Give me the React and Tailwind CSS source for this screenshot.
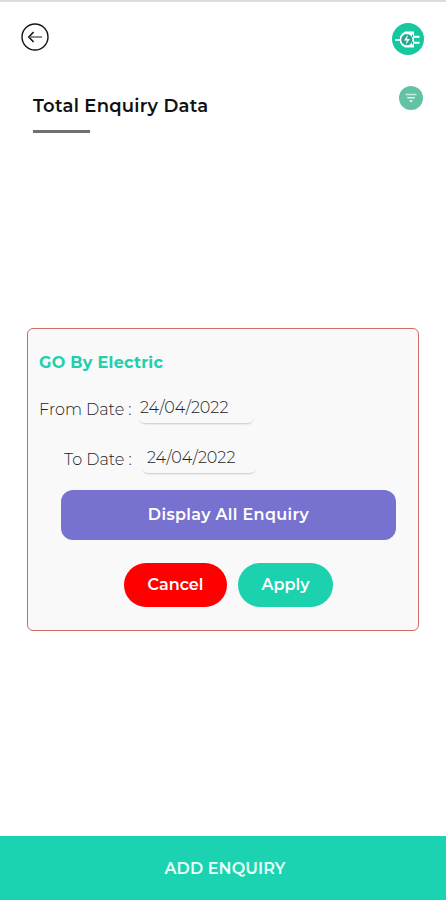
function BackIcon() {
  return (
    <svg viewBox="0 0 28 28" className="size-7" fill="none">
      <circle cx="14" cy="14" r="13" stroke="#161616" strokeWidth="1.4" />
      <path d="M12.6 9 7.8 14l4.8 5" stroke="#161616" strokeWidth="1.6" />
      <path d="M8.5 14H21" stroke="#777" strokeWidth="1.7" />
    </svg>
  );
}

function PlugLogo() {
  return (
    <svg viewBox="0 0 32 32" className="size-8" fill="none">
      <circle cx="16" cy="16" r="16" fill="#16c79f" />
      <path d="M3 17h5" stroke="#fff" strokeWidth="1.8" />
      <path d="M10 10.500 13 8.500h9v16h-9l-3-2-2-3v-6z" fill="#fff" />
      <path d="M22 13.700h5.500M22 19.800h5.500" stroke="#fff" strokeWidth="2" />
      <circle cx="14.800" cy="16.700" r="5.600" fill="#25a78c" />
      <path d="m16 11.500-4 6h3l-1.500 4.500 4.500-6h-3z" fill="#fff" />
      <path d="M20.500 11.500v2.500M20.500 18.500v3" stroke="#16b894" strokeWidth="1.2" />
    </svg>
  );
}

function FilterIcon() {
  return (
    <svg viewBox="0 0 24 24" className="size-6" fill="none">
      <circle cx="12" cy="12" r="12" fill="#63c2a6" />
      <path d="M6.500 8.500h11" stroke="#c3ebdf" strokeWidth="1.500" />
      <path d="M8.300 11.700h7.400" stroke="#e6f8f2" strokeWidth="1.500" />
      <path d="M10.700 15h2.600" stroke="#fff" strokeWidth="1.500" />
    </svg>
  );
}

export default function App() {
  return (
    <main className="flex h-[900px] w-[446px] flex-col bg-white font-['Montserrat','Inter',sans-serif] text-[#111]">
      <div className="h-[2px] shrink-0 bg-[#dcdcdc]" />
      <header className="flex h-[76px] shrink-0 items-start justify-between pt-[21px] pr-[22px] pl-[21px]">
        <button aria-label="Back"><BackIcon /></button>
        <PlugLogo />
      </header>
      <div className="flex h-[250px] shrink-0 items-start justify-between pt-2 pr-[23px] pl-[33px]">
        <div className="pt-2">
          <h1 className="text-[18px] leading-[25px] font-semibold tracking-[0.25px] whitespace-nowrap">Total Enquiry Data</h1>
          <div className="mt-[11px] h-[3px] w-[57px] bg-[#707070]" />
        </div>
        <button aria-label="Filter"><FilterIcon /></button>
      </div>
      <section className="ml-[27px] flex h-[303px] w-[392px] shrink-0 flex-col rounded-md border border-[#d26a6a] bg-[#f9f9f9]">
        <h2 className="mt-[22px] ml-[11px] text-[16px] leading-6 font-bold tracking-[0.3px] text-[#22ceac]">GO By Electric</h2>
        <div className="mt-[21px] ml-[11px] flex h-[27px] items-center text-[16px] font-light text-[#222]">
          <span className="w-[100px] whitespace-nowrap">From Date :</span>
          <span className="h-[27px] w-[115px] rounded-md pl-[1px] leading-[24px] shadow-[0_2px_2px_-1px_rgba(0,0,0,0.2)]">24/04/2022</span>
        </div>
        <div className="mt-[23px] ml-[36px] flex h-[27px] items-center text-[16px] font-light text-[#222]">
          <span className="w-[78px] whitespace-nowrap">To Date :</span>
          <span className="h-[27px] w-[114px] rounded-md pl-[5px] leading-[24px] shadow-[0_2px_2px_-1px_rgba(0,0,0,0.2)]">24/04/2022</span>
        </div>
        <button className="mt-[17px] ml-[33px] h-[50px] w-[335px] shrink-0 rounded-xl bg-[#7772cf] text-[16px] font-semibold tracking-[0.35px] text-white">Display All Enquiry</button>
        <div className="mt-[23px] ml-[96px] flex gap-[11px] text-[16px] font-semibold text-white">
          <button className="h-[44px] w-[103px] rounded-full bg-[#fe0000]">Cancel</button>
          <button className="h-[44px] w-[95px] rounded-full bg-[#1bd1ae]">Apply</button>
        </div>
      </section>
      <button className="mt-auto h-[64px] shrink-0 bg-[#1bd3b0] pt-[2px] text-[16px] font-semibold tracking-[0.1px] text-[#e9fffa]">
        <span className="relative left-[2px]">ADD ENQUIRY</span>
      </button>
    </main>
  );
}
